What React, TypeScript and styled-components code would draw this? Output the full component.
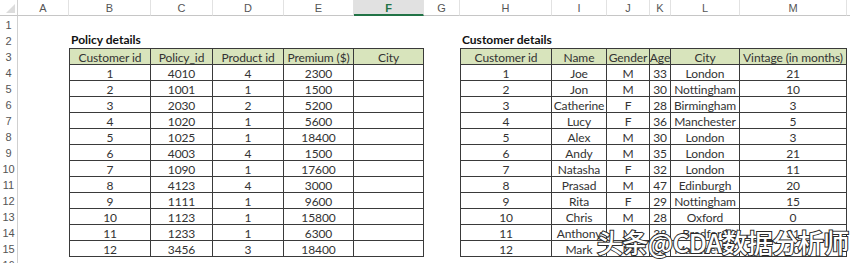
import styled, { createGlobalStyle } from "styled-components";

const GlobalStyle = createGlobalStyle`
  html, body {
    margin: 0;
    padding: 0;
    background: #ffffff;
    overflow: hidden;
  }
  body {
    font-family: Lato, "Liberation Sans", sans-serif;
  }
`;

const COLS = [18, 51, 82, 62, 71, 70, 70, 36, 92, 55, 43, 21, 69, 107, 40];
const LETTERS = ["A", "B", "C", "D", "E", "F", "G", "H", "I", "J", "K", "L", "M", "N"];
const ROW_COUNT = 16;
const ROW_H = 16;

const Sheet = styled.div`
  position: relative;
  display: grid;
  grid-template-columns: ${COLS.map((c) => `${c}px`).join(" ")};
  grid-template-rows: repeat(${ROW_COUNT + 1}, ${ROW_H}px);
  width: 850px;
  height: 263px;
  overflow: hidden;
  background: #fff;
`;

const Corner = styled.div`
  position: relative;
  border-right: 1px solid #d0d0d0;
  border-bottom: 1px solid #c6c6c6;
  box-sizing: border-box;

  &::after {
    content: "";
    position: absolute;
    right: 2px;
    bottom: 2px;
    border-left: 9px solid transparent;
    border-bottom: 9px solid #dcdcdc;
  }
`;

const ColHead = styled.div<{ $selected?: boolean }>`
  box-sizing: border-box;
  display: flex;
  align-items: center;
  justify-content: center;
  font-family: "Liberation Sans", Arial, sans-serif;
  font-size: 11px;
  color: ${(p) => (p.$selected ? "#217346" : "#555")};
  font-weight: ${(p) => (p.$selected ? 700 : 400)};
  background: ${(p) => (p.$selected ? "#e1e1e1" : "#fff")};
  border-right: 1px solid #e2e2e2;
  border-bottom: ${(p) => (p.$selected ? "2px solid #217346" : "1px solid #c6c6c6")};
  padding-top: 1px;
`;

const RowHead = styled.div<{ $row: number }>`
  grid-column: 1;
  grid-row: ${(p) => p.$row + 1};
  box-sizing: border-box;
  display: flex;
  align-items: center;
  justify-content: center;
  font-family: "Liberation Sans", Arial, sans-serif;
  font-size: 11px;
  color: #555;
  border-right: 1px solid #d0d0d0;
  padding-top: 1px;
`;

const Title = styled.div<{ $col: number; $row: number }>`
  grid-column: ${(p) => p.$col + 2} / span 3;
  grid-row: ${(p) => p.$row + 1};
  display: flex;
  align-items: flex-end;
  padding: 0 0 1px 2px;
  font-size: 12px;
  font-weight: 700;
  color: #111;
  white-space: nowrap;
`;

const Table = styled.div<{ $col: number; $row: number; $span: number; $widths: number[] }>`
  grid-column: ${(p) => p.$col + 2} / span ${(p) => p.$span};
  grid-row: ${(p) => p.$row + 1} / span 13;
  align-self: start;
  display: grid;
  grid-template-columns: ${(p) => p.$widths.map((w, i) => `${i === 0 ? w - 1 : w}px`).join(" ")};
  grid-auto-rows: ${ROW_H}px;
  border-left: 1px solid #3a3a3a;
  border-top: 1px solid #3a3a3a;
  width: max-content;
`;

const Cell = styled.div<{ $head?: boolean }>`
  box-sizing: border-box;
  display: flex;
  align-items: center;
  justify-content: center;
  white-space: nowrap;
  overflow: hidden;
  font-size: 12px;
  letter-spacing: -0.1px;
  color: #333;
  background: ${(p) => (p.$head ? "#d8e4bc" : "#fff")};
  border-right: 1px solid #3a3a3a;
  border-bottom: 1px solid #3a3a3a;
  padding-top: 1px;
`;

const Watermark = styled.div`
  position: absolute;
  left: 597px;
  top: 227px;
  font-family: "Noto Sans CJK SC", "Noto Sans", sans-serif;
  font-size: 26px;
  font-weight: 500;
  line-height: 30px;
  color: #fff;
  letter-spacing: -0.6px;
  -webkit-text-stroke: 2px #2a2a2a;
  paint-order: stroke fill;
  white-space: nowrap;
`;

const policyHead = ["Customer id", "Policy_id", "Product id", "Premium ($)", "City"];
const policyRows = [
  [1, 4010, 4, 2300],
  [2, 1001, 1, 1500],
  [3, 2030, 2, 5200],
  [4, 1020, 1, 5600],
  [5, 1025, 1, 18400],
  [6, 4003, 4, 1500],
  [7, 1090, 1, 17600],
  [8, 4123, 4, 3000],
  [9, 1111, 1, 9600],
  [10, 1123, 1, 15800],
  [11, 1233, 1, 6300],
  [12, 3456, 3, 18400],
];

const customerHead = ["Customer id", "Name", "Gender", "Age", "City", "Vintage (in months)"];
const customerRows = [
  [1, "Joe", "M", 33, "London", 21],
  [2, "Jon", "M", 30, "Nottingham", 10],
  [3, "Catherine", "F", 28, "Birmingham", 3],
  [4, "Lucy", "F", 36, "Manchester", 5],
  [5, "Alex", "M", 30, "London", 3],
  [6, "Andy", "M", 35, "London", 21],
  [7, "Natasha", "F", 32, "London", 11],
  [8, "Prasad", "M", 47, "Edinburgh", 20],
  [9, "Rita", "F", 29, "Nottingham", 15],
  [10, "Chris", "M", 28, "Oxford", 0],
  [11, "Anthony", "M", 38, "Bradford", 31],
  [12, "Mark", "M", 33, "Manchester", 30],
];

const App = () => {
  return (
    <>
      <GlobalStyle />
      <Sheet>
        <Corner />
        {LETTERS.map((l) => (
          <ColHead key={l} $selected={l === "F"}>
            {l}
          </ColHead>
        ))}
        {Array.from({ length: ROW_COUNT }, (_, i) => (
          <RowHead key={i} $row={i + 1}>
            {i + 1}
          </RowHead>
        ))}

        <Title $col={1} $row={2}>Policy details</Title>
        <Table $col={1} $row={3} $span={5} $widths={COLS.slice(2, 7)}>
          {policyHead.map((h) => (
            <Cell key={h} $head>
              {h}
            </Cell>
          ))}
          {policyRows.flatMap((r) => [
            ...r.map((v, j) => <Cell key={`${r[0]}-${j}`}>{v}</Cell>),
            <Cell key={`${r[0]}-city`} />,
          ])}
        </Table>

        <Title $col={7} $row={2}>Customer details</Title>
        <Table $col={7} $row={3} $span={6} $widths={COLS.slice(8, 14)}>
          {customerHead.map((h) => (
            <Cell key={h} $head>
              {h}
            </Cell>
          ))}
          {customerRows.flatMap((r) =>
            r.map((v, j) => <Cell key={`${r[0]}-${j}`}>{v}</Cell>)
          )}
        </Table>

        <Watermark>头条@CDA数据分析师</Watermark>
      </Sheet>
    </>
  );
};

export default App;
